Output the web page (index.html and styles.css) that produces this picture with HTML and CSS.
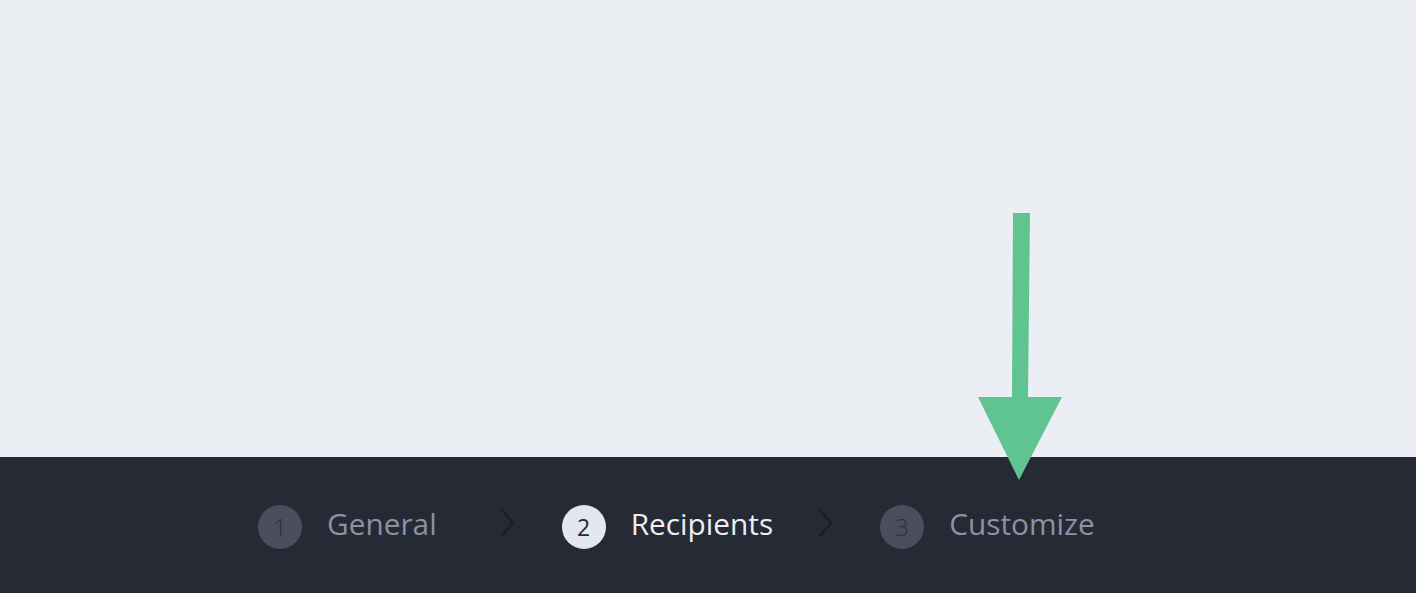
FILE: index.html
```html
<!DOCTYPE html>
<html lang="en">
<head>
  <meta charset="UTF-8" />
  <title>Steps</title>
  <link rel="stylesheet" href="styles.css">
</head>
<body>
  <div class="canvas"></div>

  <div class="stepbar">
    <div class="step">
      <span class="step-num">1</span>
      <span class="step-label">General</span>
    </div>
    <svg class="chevron" width="20" height="32" viewBox="0 0 20 32"><path d="M5 3 L16 16 L5 29" fill="none" stroke="#1b1e26" stroke-width="2.5"/></svg>
    <div class="step active">
      <span class="step-num">2</span>
      <span class="step-label">Recipients</span>
    </div>
    <svg class="chevron chevron-tight" width="20" height="32" viewBox="0 0 20 32"><path d="M5 3 L16 16 L5 29" fill="none" stroke="#1b1e26" stroke-width="2.5"/></svg>
    <div class="step">
      <span class="step-num">3</span>
      <span class="step-label">Customize</span>
    </div>
  </div>

  <!-- annotation arrow -->
  <svg class="pointer" width="90" height="275" viewBox="0 0 90 275">
    <path d="M35 0 L52 0 L50 184 L84 184 L41 267 L0 184 L34 184 Z" fill="#5fc48f"/>
  </svg>
</body>
</html>
```

FILE: styles.css
```css
html, body {
  margin: 0;
  height: 100%;
}

body {
  font-family: "Open Sans", "Liberation Sans", sans-serif;
  background-color: #ebeef2;
  display: flex;
  flex-direction: column;
  position: relative;
  overflow: hidden;
}

.canvas {
  height: 457px;
  flex: none;
}

.stepbar {
  flex: 1;
  background-color: #262a35;
  display: flex;
  align-items: center;
  padding-left: 258px;
}

.step {
  display: flex;
  align-items: center;
  gap: 25px;
  height: 44px;
  margin-top: 4px;
}

.step-num {
  width: 44px;
  height: 44px;
  border-radius: 50%;
  background-color: #4a4f5e;
  color: #2a2e38;
  font-size: 23px;
  font-weight: 300;
  display: flex;
  align-items: center;
  justify-content: center;
}

.step-label {
  font-size: 29.8px;
  color: #8b92a4;
  line-height: 1;
  padding-bottom: 6px;
}

.step.active .step-num {
  background-color: #e4e7ee;
  color: #262a35;
  font-weight: 400;
}

.step.active .step-label {
  color: #eceef3;
}

.chevron {
  margin: 0 45px 4px 60px;
}

.chevron-tight {
  margin-left: 42px;
}

.pointer {
  position: absolute;
  left: 978px;
  top: 213px;
}
```
